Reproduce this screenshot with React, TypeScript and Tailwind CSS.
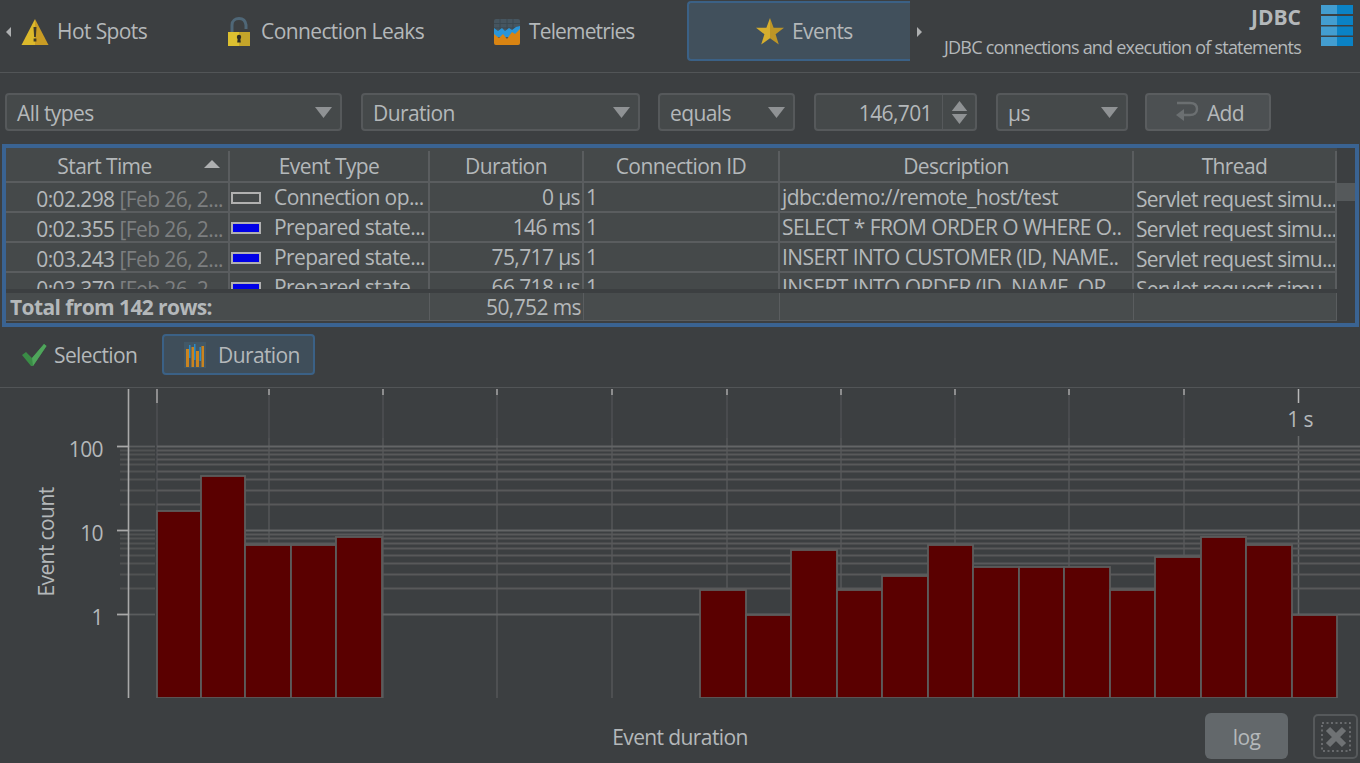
const rows = [
  { time: "0:02.298", swatch: "bg-[#45494a]", type: "Connection op...", duration: "0 µs", desc: "jdbc:demo://remote_host/test" },
  { time: "0:02.355", swatch: "bg-[#0000e6]", type: "Prepared state...", duration: "146 ms", desc: "SELECT * FROM ORDER O WHERE O.." },
  { time: "0:03.243", swatch: "bg-[#0000e6]", type: "Prepared state...", duration: "75,717 µs", desc: "INSERT INTO CUSTOMER (ID, NAME.." },
  { time: "0:03.379", swatch: "bg-[#0000e6]", type: "Prepared state...", duration: "66,718 µs", desc: "INSERT INTO ORDER (ID, NAME, OR.." },
];

const columns = "grid grid-cols-[224px_200px_154px_196px_354px_203px]";

// [left, right, top] in chart coordinates
const bars = [
  [157, 201, 123], [201, 245, 88], [245, 291, 157], [291, 336, 157], [336, 382, 149],
  [700, 746, 202], [746, 791, 227], [791, 837, 162], [837, 882, 202], [882, 928, 188],
  [928, 973, 157], [973, 1019, 179], [1019, 1064, 179], [1064, 1110, 179], [1110, 1155, 202],
  [1155, 1201, 169], [1201, 1246, 149], [1246, 1292, 157], [1292, 1337, 227],
];
const verticals = [269, 383, 497, 612, 727, 841, 955, 1069, 1184];
const decades = [58.5, 142.5, 226.5];
const minorOffsets = [4, 8, 13, 18, 25, 33, 44, 58];

function Caret({ className = "" }: { className?: string }) {
  return (
    <svg width="17" height="11" viewBox="0 0 17 11" className={className}>
      <path d="M0 0h17l-8.5 11z" fill="#8f9294" />
    </svg>
  );
}

function WarningIcon() {
  return (
    <svg width="28" height="28" viewBox="0 0 28 28">
      <path d="M14 1L0.5 27H14z" fill="#dcb92b" />
      <path d="M14 1l13.5 26H14z" fill="#c99c24" />
      <path d="M12.5 9h3l-.6 10h-1.8z" fill="#3f3a28" />
      <rect x="12.6" y="20.5" width="2.8" height="3" fill="#3f3a28" />
    </svg>
  );
}

function LockIcon() {
  return (
    <svg width="22" height="30" viewBox="0 0 22 30">
      <path d="M4 15V8C4 3.5 7.5 1.5 11 1.5c3.5 0 6.5 2 7 6.500v4" fill="none" stroke="#4f6777" strokeWidth="3" />
      <rect x="0" y="15" width="11" height="14" fill="#dcc030" />
      <rect x="11" y="15" width="11" height="14" fill="#c4a52a" />
      <circle cx="11" cy="20" r="2.2" fill="#2e2e24" />
      <path d="M9.800 20.500h2.400l.6 5h-3.600z" fill="#2e2e24" />
    </svg>
  );
}

function TelemetryIcon() {
  return (
    <svg width="26" height="26" viewBox="0 0 26 26">
      <rect width="26" height="26" rx="2" fill="#46555f" />
      <path d="M0 4.500h26M0 9h26M6 0v11M13 0v11M19 0v11" stroke="#3b4850" strokeWidth="1" />
      <path d="M0 9l4 3 4-3 3 3 4-3 3 2 4-3 4-1v11H0z" fill="#2a95d8" />
      <path d="M0 15l5 4 4-4 4 5 5-7 3 2 5-5v14a2 2 0 0 1-2 2H2a2 2 0 0 1-2-2z" fill="#d98412" />
    </svg>
  );
}

function StarIcon() {
  return (
    <svg width="28" height="27" viewBox="0 0 28 27">
      <path d="M14 0l3.600 9.800H28l-8.400 6.400 3.200 10.300L14 20.300z" fill="#bd9527" />
      <path d="M14 0l-3.600 9.800H0l8.400 6.400-3.200 10.300L14 20.300z" fill="#d6ae2e" />
    </svg>
  );
}

function DatabaseIcon() {
  return (
    <svg width="32" height="41" viewBox="0 0 32 41">
      {[0, 11, 21.5, 32].map((y) => (
        <g key={y}>
          <rect x="0" y={y} width="16" height="9" fill="#439dd0" />
          <rect x="16" y={y} width="16" height="9" fill="#0a82c5" />
        </g>
      ))}
    </svg>
  );
}

function ReturnIcon() {
  return (
    <svg width="24" height="22" viewBox="0 0 24 22">
      <path d="M2 2h13c4 0 7 2 7 6s-3 6-7 6H7" fill="none" stroke="#6b6f71" strokeWidth="2.4" />
      <path d="M9 8v12L1 14z" fill="#6b6f71" />
    </svg>
  );
}

function CheckIcon() {
  return (
    <svg width="26" height="24" viewBox="0 0 26 24">
      <path d="M1 12l4-3 6 6L23 1l2.500 2L12 23h-2z" fill="#3a8c46" />
      <path d="M11 15L23 1l2.500 2L12 23z" fill="#4fa55b" />
    </svg>
  );
}

function DurationIcon() {
  return (
    <svg width="22" height="26" viewBox="0 0 22 26">
      <rect width="22" height="26" fill="#425867" />
      <rect x="2" y="7" width="3" height="18" fill="#c98420" />
      <rect x="7.500" y="5" width="2.500" height="20" fill="#c98420" />
      <rect x="12" y="9" width="3" height="16" fill="#c98420" />
      <rect x="17.500" y="4" width="2.500" height="21" fill="#c98420" />
      <rect x="5" y="3" width="1.500" height="13" fill="#2a8cc8" />
      <rect x="10" y="2" width="1.500" height="16" fill="#2a8cc8" />
      <rect x="15.500" y="5" width="1.500" height="14" fill="#2a8cc8" />
    </svg>
  );
}

function CloseIcon() {
  return (
    <svg width="30" height="30" viewBox="0 0 30 30">
      <rect x="1" y="1" width="28" height="28" fill="none" stroke="#777a7c" strokeWidth="1.5" strokeDasharray="2 2.5" />
      <path d="M7 7l16 16M23 7L7 23" stroke="#6f7274" strokeWidth="6" />
    </svg>
  );
}

function Select({ label, className }: { label: string; className: string }) {
  return (
    <div className={`flex h-[38px] items-center justify-between rounded-[4px] border-2 border-[#56595b] bg-[#45494a] pl-[10px] pr-[8px] ${className}`}>
      <span className="pt-[2px]">{label}</span>
      <Caret />
    </div>
  );
}

function Chart() {
  return (
    <svg width="1360" height="310" viewBox="0 0 1360 310" className="block" fontFamily="'Open Sans', sans-serif" fontSize="21" letterSpacing="-0.6" fill="#b4b8ba">
      {/* top ticks */}
      {verticals.map((x) => (
        <g key={x}>
          <line x1={x} x2={x} y1="1" y2="7" stroke="#a8a8a8" strokeWidth="1.5" />
          <line x1={x} x2={x} y1="7" y2="50" stroke="#4e5153" strokeWidth="1.5" />
          <line x1={x} x2={x} y1="50" y2="310" stroke="#555758" strokeWidth="1.5" />
        </g>
      ))}
      <line x1="157" x2="157" y1="1" y2="15" stroke="#a8a8a8" strokeWidth="1.5" />
      <line x1="157" x2="157" y1="15" y2="310" stroke="#4e5153" strokeWidth="1.5" />
      <line x1="1298.5" x2="1298.5" y1="1" y2="15" stroke="#b8b8b8" strokeWidth="1.5" />
      <line x1="1298.5" x2="1298.5" y1="48" y2="227" stroke="#666869" strokeWidth="1.5" />
      {/* grid */}
      {decades.map((base, d) => (
        <g key={base}>
          <line x1="128" x2="155" y1={base} y2={base} stroke="#5a5c5d" strokeWidth="1.8" />
          <line x1="157" x2="1360" y1={base} y2={base} stroke="#636566" strokeWidth="1.8" />
          <line x1="117" x2="128" y1={base} y2={base} stroke="#a8a8a8" strokeWidth="1.8" />
          {d < 2 &&
            minorOffsets.map((offset) => (
              <g key={offset}>
                <line x1="120" x2="155" y1={base + offset} y2={base + offset} stroke="#505253" strokeWidth="1.8" />
                <line x1="157" x2="1360" y1={base + offset} y2={base + offset} stroke="#58595a" strokeWidth="1.8" />
              </g>
            ))}
        </g>
      ))}
      {/* bars */}
      {bars.map(([left, right, top]) => (
        <rect key={left} x={left} y={top} width={right - left} height={310 - top} fill="#5a0000" stroke="#5c5c5c" strokeWidth="1.8" />
      ))}
      <rect x="100" y="310" width="1260" height="2" fill="#3c3f41" />
      <line x1="128.5" x2="128.5" y1="1" y2="310" stroke="#a9a9a9" strokeWidth="1.6" />
      <text x="103" y="69" textAnchor="end">100</text>
      <text x="103" y="153" textAnchor="end">10</text>
      <text x="103" y="237" textAnchor="end">1</text>
      <text x="1300" y="39" textAnchor="middle">1 s</text>
      <text transform="translate(54 154) rotate(-90)" textAnchor="middle">Event count</text>
    </svg>
  );
}

export default function App() {
  return (
    <div
      className="flex h-[763px] w-[1360px] flex-col overflow-hidden bg-[#3c3f41] text-[21px] leading-none tracking-[-0.6px] text-[#b4b8ba]"
      style={{ fontFamily: "'Open Sans', sans-serif" }}
    >
      {/* Top tabs */}
      <div className="flex h-[73px] shrink-0 border-b border-[#525557]">
        <div className="flex h-[63px] w-[16px] shrink-0 items-center pl-[6px]">
          <div className="h-0 w-0 border-y-[5px] border-r-[5px] border-y-transparent border-r-[#aeb0b1]" />
        </div>
        <div className="flex h-[63px] w-[207px] shrink-0 items-center gap-[8px] pl-[5px]">
          <WarningIcon />
          <span>Hot Spots</span>
        </div>
        <div className="flex h-[63px] w-[234px] shrink-0 items-center gap-[11px] pl-[5px]">
          <LockIcon />
          <span>Connection Leaks</span>
        </div>
        <div className="flex h-[63px] w-[230px] shrink-0 items-center gap-[9px] pl-[37px]">
          <TelemetryIcon />
          <span className="tracking-[-0.85px]">Telemetries</span>
        </div>
        <div className="mt-px flex h-[60px] w-[223px] shrink-0 items-center gap-[8px] rounded-l-[4px] border-y-2 border-l-2 border-[#3b6186] bg-[#41505c] pl-[67px]">
          <StarIcon />
          <span>Events</span>
        </div>
        <div className="flex h-[63px] w-[33px] shrink-0 items-center pl-[7px]">
          <div className="h-0 w-0 border-y-[5px] border-l-[5px] border-y-transparent border-l-[#aeb0b1]" />
        </div>
        <div className="min-w-0 flex-1 whitespace-nowrap pr-px pt-[7px] text-right">
          <div className="text-[21px] font-bold leading-[20px] tracking-normal">JDBC</div>
          <div className="mt-[8px] text-[18px] leading-[24px] tracking-[-0.78px]">JDBC connections and execution of statements</div>
        </div>
        <div className="shrink-0 pl-[19px] pr-[7px] pt-[5px]">
          <DatabaseIcon />
        </div>
      </div>

      {/* Filter row */}
      <div className="mt-[20px] flex h-[38px] shrink-0 pl-[5px]">
        <Select label="All types" className="w-[337px]" />
        <Select label="Duration" className="ml-[19px] w-[279px]" />
        <Select label="equals" className="ml-[18px] w-[137px]" />
        <div className="ml-[19px] flex w-[163px] items-center rounded-[4px] border-2 border-[#56595b] bg-[#45494a]">
          <span className="w-[126px] pr-[10px] pt-[2px] text-right">146,701</span>
          <div className="flex h-full flex-1 flex-col items-center justify-center gap-[3px] border-l border-[#56595b]">
            <Caret className="h-[10px] w-[17px] rotate-180" />
            <Caret className="h-[10px] w-[17px]" />
          </div>
        </div>
        <Select label="µs" className="ml-[19px] w-[132px]" />
        <div className="ml-[17px] flex w-[126px] items-center justify-center gap-[8px] rounded-[4px] border-2 border-[#5a5d5f] bg-[#4c5052] pl-[3px]">
          <ReturnIcon />
          <span className="pt-[2px]">Add</span>
        </div>
      </div>

      {/* Events table */}
      <div className="ml-[2px] mr-px mt-[13px] flex h-[183px] shrink-0 border-[4px] border-[#3a6392] bg-[#3c3f41]">
        <div className="w-[1331px] shrink-0">
          <div className={`${columns} h-[35px] border-b-2 border-[#5a5d5f] bg-[#45494a] pt-[3px] text-center`}>
            <div className="relative flex items-center justify-center border-r-2 border-[#5a5d5f] pr-[25px]">
              Start Time
              <div className="absolute right-[8px] top-[9px] h-0 w-0 border-x-[8px] border-b-[8px] border-x-transparent border-b-[#aeb0b1]" />
            </div>
            {["Event Type", "Duration", "Connection ID", "Description", "Thread"].map((title) => (
              <div key={title} className="flex items-center justify-center border-r-2 border-[#5a5d5f]">
                {title}
              </div>
            ))}
          </div>
          <div className="h-[106px] overflow-hidden bg-[#45494a]">
            {rows.map((row) => (
              <div key={row.time} className={`${columns} h-[30px] border-b-2 border-[#5a5d5f]`}>
                <div className="flex items-center justify-end gap-[5px] overflow-hidden whitespace-nowrap border-r-2 border-[#5a5d5f] pr-[5px] pt-[4px]">
                  <span>{row.time}</span>
                  <span className="text-[#7d7f80]">[Feb 26, 2...</span>
                </div>
                <div className="flex items-center overflow-hidden whitespace-nowrap border-r-2 border-[#5a5d5f] pl-px pt-px">
                  <div className={`mr-[13px] h-[12px] w-[30px] shrink-0 border-2 border-[#b0b0b0] ${row.swatch}`} />
                  {row.type}
                </div>
                <div className="flex items-center justify-end whitespace-nowrap border-r-2 border-[#5a5d5f] pr-[2px] pt-px">{row.duration}</div>
                <div className="flex items-center border-r-2 border-[#5a5d5f] pl-[2px] pt-px">1</div>
                <div className="flex items-center overflow-hidden whitespace-nowrap border-r-2 border-[#5a5d5f] pl-[2px] pt-px">{row.desc}</div>
                <div className="flex items-center overflow-hidden whitespace-nowrap border-r-2 border-[#5a5d5f] pl-[2px] pt-[4px] tracking-[-0.75px]">Servlet request simu...</div>
              </div>
            ))}
          </div>
          <div className={`${columns} mt-[4px] h-[28px] border-b border-[#5a5d5f] bg-[#484c4d]`}>
            <div className="col-span-2 flex items-center whitespace-nowrap border-r border-[#5a5d5f] pl-[4px] pt-[2px] font-bold">Total from 142 rows:</div>
            <div className="flex items-center justify-end border-r border-[#5a5d5f] pr-[2px] pt-[2px]">50,752 ms</div>
            <div className="border-r border-[#5a5d5f]" />
            <div className="border-r border-[#5a5d5f]" />
            <div className="border-r border-[#5a5d5f]" />
          </div>
        </div>
        {/* Scrollbar */}
        <div className="flex-1 pt-[35px]">
          <div className="h-[18px] bg-[#55595b]" />
        </div>
      </div>

      {/* Chart tabs */}
      <div className="mt-[7px] flex h-[54px] shrink-0 items-start border-b border-[#525557] pl-[21px]">
        <div className="flex h-[41px] w-[141px] items-center gap-[7px]">
          <CheckIcon />
          <span className="pt-[2px]">Selection</span>
        </div>
        <div className="flex h-[41px] w-[153px] items-center gap-[12px] rounded-[4px] border-2 border-[#3b6186] bg-[#3f4e5a] pl-[20px]">
          <DurationIcon />
          <span className="pt-[2px]">Duration</span>
        </div>
      </div>

      <Chart />

      {/* Bottom row */}
      <div className="relative flex flex-1 items-start">
        <div className="mt-[29px] w-[1363px] text-center">Event duration</div>
        <div className="absolute left-[1205px] top-[15px] flex h-[46px] w-[83px] items-center justify-center rounded-[6px] bg-[#63686b] pt-[2px]">log</div>
        <div className="absolute left-[1313px] top-[16px] flex h-[45px] w-[45px] items-center justify-center rounded-[5px] border-2 border-[#56595b]">
          <CloseIcon />
        </div>
      </div>
    </div>
  );
}
